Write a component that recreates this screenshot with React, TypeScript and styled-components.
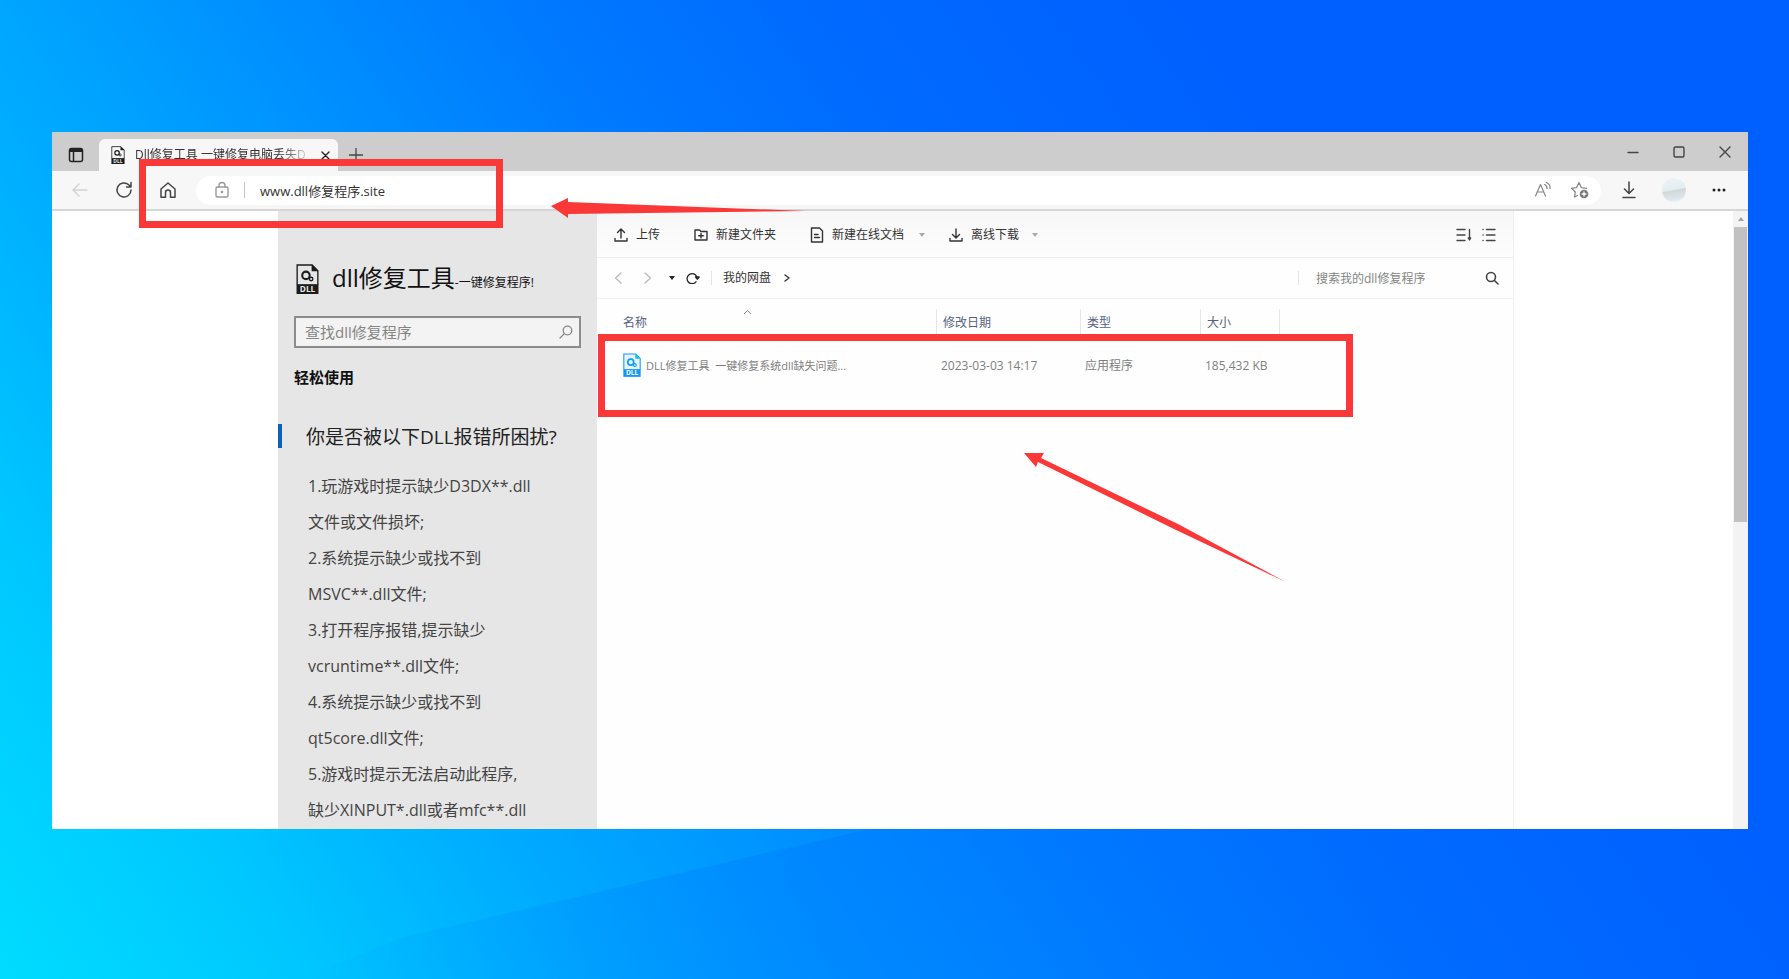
import React from 'react';
import styled, { createGlobalStyle } from 'styled-components';

const Global = createGlobalStyle`
  * { box-sizing: border-box; }
  body {
    margin: 0;
    font-family: "Open Sans", "Noto Sans CJK SC", sans-serif;
    font-size: 12px;
    color: #333;
  }
  button, input { font-family: inherit; font-size: inherit; color: inherit; }
`;

const Desktop = styled.div`
  position: relative;
  min-height: 100vh;
  display: flex;
  padding: 132px 41px 150px 52px;
  overflow: hidden;
  background: linear-gradient(56deg, #00dcff 0%, #00c8ff 12%, #00acff 24%, #0092ff 36%, #007aff 48%, #006aff 60%, #0060ff 75%);
`;

const Beams = styled.svg`
  position: absolute;
  inset: 0;
  width: 100%;
  height: 100%;
`;

const BrowserWindow = styled.div`
  position: relative;
  flex: 1;
  min-width: 0;
  display: flex;
  flex-direction: column;
  background: #fff;
`;

const TabBar = styled.div`
  display: flex;
  align-items: stretch;
  height: 39px;
  background: #cdcdcd;
`;

const TabTools = styled.div`
  display: flex;
  align-items: stretch;
  padding-top: 7px;
`;

const IconButton = styled.button<{ $w?: number; $color?: string }>`
  display: flex;
  align-items: center;
  justify-content: center;
  flex: none;
  width: ${(p) => p.$w ?? 44}px;
  padding: 0;
  border: 0;
  background: none;
  color: ${(p) => p.$color ?? '#444'};
`;

const Tab = styled.div`
  display: flex;
  align-items: center;
  width: 239px;
  padding: 0 5px 0 12px;
  gap: 10px;
  border-radius: 6px 6px 0 0;
  background: #f7f7f7;
`;

const TabTitle = styled.span`
  flex: 1;
  white-space: nowrap;
  line-height: 20px;
  mask-image: linear-gradient(90deg, #000 84%, rgba(0, 0, 0, 0.2) 100%);
`;

const Spacer = styled.div`
  flex: 1;
`;

const NavBar = styled.div`
  display: flex;
  align-items: center;
  height: 40px;
  padding: 0 2px 0 6px;
  background: #f7f7f7;
  border-bottom: 2px solid #d6d6d6;
`;

const AddressBar = styled.label`
  display: flex;
  align-items: center;
  flex: 1;
  height: 29px;
  margin-left: 6px;
  padding: 0 2px 0 4px;
  border-radius: 15px;
  background: #fff;
`;

const Rule = styled.span<{ $h?: number; $color?: string }>`
  flex: none;
  width: 1px;
  height: ${(p) => p.$h ?? 16}px;
  background: ${(p) => p.$color ?? '#e4e4e4'};
`;

const UrlInput = styled.input`
  flex: 1;
  min-width: 0;
  margin-left: 15px;
  padding: 0;
  border: 0;
  outline: 0;
  background: none;
  font-size: 13px;
  color: #333;
`;

const Avatar = styled.span`
  width: 24px;
  height: 24px;
  border-radius: 50%;
  background: linear-gradient(170deg, #eef4f7 0%, #e2edf2 48%, #d4d6d8 52%, #dbe6ea 80%, #f2f5f6 100%);
`;

const Body = styled.div`
  flex: 1;
  display: flex;
`;

const Page = styled.div`
  flex: 1;
  min-width: 0;
  display: flex;
  padding: 0 219px 0 226px;
`;

const ScrollTrack = styled.div`
  width: 15px;
  padding: 6px 1px 0;
  background: #f3f3f3;
  display: flex;
  flex-direction: column;
  align-items: center;
  gap: 6px;
`;

const ScrollThumb = styled.div`
  width: 13px;
  height: 295px;
  background: #c1c1c1;
`;

const Sidebar = styled.aside`
  flex: none;
  width: 319px;
  padding: 50px 16px 0;
  background: #e6e6e6;
`;

const Brand = styled.div`
  display: flex;
  align-items: center;
  gap: 13px;
  height: 36px;
  padding-left: 2px;
  color: #111;
`;

const BrandName = styled.h1`
  margin: 0;
  padding-top: 3px;
  font-size: 24px;
  line-height: 36px;
  font-weight: 400;
  white-space: nowrap;
`;

const BrandNote = styled.small`
  font-size: 12px;
`;

const SearchBox = styled.label`
  display: flex;
  align-items: center;
  height: 32px;
  margin-top: 19px;
  padding: 0 6px 0 9px;
  border: 2px solid #8c8c8c;
  background: #f3f3f3;
`;

const SearchInput = styled.input<{ $size: number }>`
  flex: 1;
  min-width: 0;
  padding: 0;
  border: 0;
  outline: 0;
  background: none;
  font-size: ${(p) => p.$size}px;
  &::placeholder { color: #858585; opacity: 1; }
`;

const SectionTitle = styled.h2`
  margin: 18px 0 0;
  font-size: 15px;
  line-height: 22px;
  font-weight: 700;
  color: #111;
`;

const Question = styled.h3`
  display: flex;
  align-items: center;
  height: 24px;
  margin: 36px -16px 0;
  padding-left: 24px;
  border-left: 4px solid #0a63b0;
  font-size: 19px;
  font-weight: 400;
  white-space: nowrap;
  color: #222;
`;

const Causes = styled.p`
  margin: 20px 0 0;
  padding-left: 14px;
  font-size: 16px;
  line-height: 36px;
  white-space: nowrap;
  color: #444;
`;

const Drive = styled.main`
  flex: 1;
  min-width: 0;
  border-right: 1px solid #f0f0f0;
  background: #fefefe;
`;

const Actions = styled.div`
  display: flex;
  align-items: center;
  height: 47px;
  padding: 2px 17px 0 17px;
  border-bottom: 1px solid #eee;
  background: linear-gradient(#f7f7f7, #fdfdfd);
`;

const Action = styled.button<{ $gap: number }>`
  display: flex;
  align-items: center;
  gap: 8px;
  margin-right: ${(p) => p.$gap}px;
  padding: 0;
  border: 0;
  background: none;
  line-height: 20px;
  white-space: nowrap;
  color: #333;
`;

const ViewTools = styled.div`
  display: flex;
  gap: 10px;
`;

const Caret = styled.i<{ $ml?: number; $color: string; $up?: boolean }>`
  width: 0;
  height: 0;
  margin-left: ${(p) => p.$ml ?? 0}px;
  border: 3px solid transparent;
  border-top: ${(p) => (p.$up ? '0' : `4px solid ${p.$color}`)};
  border-bottom: ${(p) => (p.$up ? `4px solid ${p.$color}` : '0')};
`;

const PathBar = styled.nav`
  display: flex;
  align-items: center;
  height: 41px;
  padding: 0 13px 0 10px;
  border-bottom: 1px solid #f0f0f0;
`;

const Crumb = styled.a`
  margin: 0 13px 0 11px;
  line-height: 20px;
  text-decoration: none;
  color: #333;
`;

const DriveSearch = styled.label`
  display: flex;
  align-items: center;
  width: 201px;
  padding-left: 17px;
`;

const FileTable = styled.table`
  width: 100%;
  table-layout: fixed;
  border-collapse: collapse;
`;

const HeadCell = styled.th<{ $first?: boolean; $line?: boolean }>`
  position: relative;
  height: 36px;
  padding: 12px 0 0 ${(p) => (p.$first ? 26 : 6)}px;
  text-align: left;
  line-height: 22px;
  font-weight: 400;
  color: #56627f;
  background: ${(p) => (p.$line ? 'linear-gradient(#e6e6e6, #e6e6e6) right 0 top 10px / 1px 26px no-repeat' : 'none')};
`;

const SortMark = styled.svg`
  position: absolute;
  left: 146px;
  top: 10px;
`;

const Cell = styled.td<{ $first?: boolean }>`
  height: 60px;
  padding: 0 0 0 ${(p) => (p.$first ? 26 : 4)}px;
  color: #808080;
  white-space: nowrap;
`;

const FileName = styled.span`
  display: flex;
  align-items: center;
  gap: 5px;
  font-size: 11px;
  white-space: pre;
`;

const Highlight = styled.div<{ $x: number; $y: number; $w: number; $h: number }>`
  position: absolute;
  left: ${(p) => p.$x}px;
  top: ${(p) => p.$y}px;
  width: ${(p) => p.$w}px;
  height: ${(p) => p.$h}px;
  border: 7px solid #fb3838;
  pointer-events: none;
`;

const Arrows = styled.svg`
  position: absolute;
  left: 0;
  top: 0;
  width: 100%;
  height: 100%;
  pointer-events: none;
`;

const DllSheet = styled.svg`
  flex: none;
`;

const Line = ({ w, h, box, sw = 1.4, children }: { w: number; h: number; box: string; sw?: number; children: React.ReactNode }) => (
  <svg width={w} height={h} viewBox={box} fill="none" stroke="currentColor" strokeWidth={sw} strokeLinecap="round" strokeLinejoin="round" aria-hidden="true">
    {children}
  </svg>
);

const DllIcon = ({ w, h, blue }: { w: number; h: number; blue?: boolean }) => {
  const c = blue ? '#139af0' : '#1c1c1c';
  return (
    <DllSheet width={w} height={h} viewBox="0 0 22 29" aria-hidden="true">
      <path d="M1 20V1h14.5L21 6.500V20" fill={blue ? '#e4f5ff' : 'none'} stroke={c} strokeWidth="1.300" />
      <path d="M15 0.500V7h6.500z" fill={blue ? '#19c3e6' : c} />
      <circle cx="9.500" cy="11" r="3.600" fill="none" stroke={c} strokeWidth="2" />
      <circle cx="14.500" cy="14.500" r="1.700" fill="none" stroke={c} strokeWidth="1.300" />
      <rect x="0.400" y="19.500" width="21.200" height="9.500" fill={c} />
      <text x="11" y="27.300" textAnchor="middle" fontSize="8" fontWeight="700" fontFamily="Open Sans, sans-serif" fill={blue ? '#fff' : '#e6e6e6'}>DLL</text>
    </DllSheet>
  );
};

const causes = [
  '1.玩游戏时提示缺少D3DX**.dll',
  '文件或文件损坏;',
  '2.系统提示缺少或找不到',
  'MSVC**.dll文件;',
  '3.打开程序报错,提示缺少',
  'vcruntime**.dll文件;',
  '4.系统提示缺少或找不到',
  'qt5core.dll文件;',
  '5.游戏时提示无法启动此程序,',
  '缺少XINPUT*.dll或者mfc**.dll',
];

export default function App() {
  return (
    <Desktop>
      <Global />
      <Beams viewBox="0 0 1789 979" preserveAspectRatio="none" aria-hidden="true">
        <defs>
          <linearGradient id="beam" x1="0" y1="0" x2="1" y2="0">
            <stop offset="0" stopColor="#0078ff" stopOpacity="0" />
            <stop offset="0.350" stopColor="#0078ff" stopOpacity="0.400" />
            <stop offset="1" stopColor="#0060ff" stopOpacity="0" />
          </linearGradient>
        </defs>
        <path d="M300 979L400 938 870 829H1789V979z" fill="url(#beam)" />
      </Beams>
      <BrowserWindow>
        <TabBar>
          <TabTools>
            <IconButton $w={47} $color="#222" aria-label="标签页操作">
              <Line w={16} h={16} box="0 0 16 16" sw={1.500}>
                <rect x="1.500" y="1.500" width="13" height="13" rx="2" />
                <path d="M2 3.500h12" strokeWidth="3" strokeLinecap="butt" />
                <path d="M5.500 5v9" />
              </Line>
            </IconButton>
            <Tab>
              <DllIcon w={14} h={18} />
              <TabTitle>Dll修复工具 一键修复电脑丢失D</TabTitle>
              <IconButton $w={20} $color="#222" aria-label="关闭标签页">
                <Line w={9} h={9} box="0 0 9 9"><path d="M1 1l7 7M8 1l-7 7" /></Line>
              </IconButton>
            </Tab>
            <IconButton $w={36} aria-label="新建标签页">
              <Line w={14} h={14} box="0 0 14 14" sw={1.300}><path d="M7 0.500v13M0.500 7h13" /></Line>
            </IconButton>
          </TabTools>
          <Spacer />
          <IconButton $w={46} aria-label="最小化">
            <Line w={12} h={12} box="0 0 12 12"><path d="M1 6.500h10" /></Line>
          </IconButton>
          <IconButton $w={46} aria-label="最大化">
            <Line w={12} h={12} box="0 0 12 12"><rect x="1" y="1" width="10" height="10" rx="1.500" /></Line>
          </IconButton>
          <IconButton $w={46} aria-label="关闭">
            <Line w={12} h={12} box="0 0 12 12"><path d="M1 1l10 10M11 1L1 11" /></Line>
          </IconButton>
        </TabBar>
        <NavBar>
          <IconButton $color="#d2d2d2" aria-label="后退">
            <Line w={16} h={14} box="0 0 16 14"><path d="M15 7H1M7 1L1 7l6 6" /></Line>
          </IconButton>
          <IconButton aria-label="刷新">
            <Line w={18} h={18} box="0 0 18 18" sw={1.500}><path d="M16 9a7 7 0 1 1-2.300-5.200L16 6M16 1.500V6h-4.500" /></Line>
          </IconButton>
          <IconButton aria-label="主页">
            <Line w={18} h={18} box="0 0 18 18" sw={1.500}><path d="M2 8L9 2l7 6v8.300h-4.500V11.500a2.500 2.500 0 0 0-5 0v4.800H2z" /></Line>
          </IconButton>
          <AddressBar>
            <IconButton as="span" $color="#999">
              <Line w={16} h={18} box="0 0 16 18" sw={1.400}>
                <rect x="2" y="6" width="12" height="10" rx="1.500" />
                <path d="M5 6V4.500a3 3 0 0 1 6 0V6" />
                <circle cx="8" cy="11" r="0.600" fill="currentColor" />
              </Line>
            </IconButton>
            <Rule $color="#c4c4c4" />
            <UrlInput aria-label="地址" defaultValue="www.dll修复程序.site" />
            <IconButton $w={36} $color="#888" aria-label="朗读">
              <Line w={18} h={18} box="0 0 18 18" sw={1.200}>
                <path d="M1.500 15L6.500 3.500 11.500 15M3 11h7M10.500 3.500a4 4 0 0 1 2.500 4M12.300 1.500a6 6 0 0 1 3.800 6" />
              </Line>
            </IconButton>
            <IconButton $w={38} $color="#888" aria-label="收藏">
              <Line w={20} h={18} box="0 0 20 18" sw={1.300}>
                <path d="M7.500 14.500l-3 1.500.8-5L1.500 7.300l5-.7L9 1.500l2.300 5.100 5.200.7" />
                <circle cx="14" cy="13" r="4.300" fill="#777" stroke="none" />
                <path d="M12 13h4M14 11v4" stroke="#fff" />
              </Line>
            </IconButton>
          </AddressBar>
          <IconButton $w={56} aria-label="下载">
            <Line w={14} h={18} box="0 0 14 18" sw={1.500}><path d="M7 1v11M2.500 8L7 12.500 11.500 8M1 16.500h12" /></Line>
          </IconButton>
          <IconButton $w={34} aria-label="个人资料"><Avatar /></IconButton>
          <IconButton $w={55} aria-label="设置及其他">
            <svg width="14" height="4" viewBox="0 0 14 4" aria-hidden="true" fill="#222">
              <circle cx="2" cy="2" r="1.500" /><circle cx="7" cy="2" r="1.500" /><circle cx="12" cy="2" r="1.500" />
            </svg>
          </IconButton>
        </NavBar>
        <Body>
          <Page>
            <Sidebar>
              <Brand>
                <DllIcon w={23} h={30} />
                <BrandName>dll修复工具<BrandNote>-一键修复程序!</BrandNote></BrandName>
              </Brand>
              <SearchBox>
                <SearchInput $size={15} aria-label="查找" placeholder="查找dll修复程序" />
                <IconButton $w={14} $color="#888" aria-label="搜索">
                  <Line w={14} h={14} box="0 0 14 14" sw={1.300}><circle cx="8.500" cy="5.500" r="4.300" /><path d="M5.400 8.600L1 13" /></Line>
                </IconButton>
              </SearchBox>
              <SectionTitle>轻松使用</SectionTitle>
              <Question>你是否被以下DLL报错所困扰?</Question>
              <Causes>
                {causes.map((line, i) => (
                  <React.Fragment key={i}>{i > 0 && <br />}{line}</React.Fragment>
                ))}
              </Causes>
            </Sidebar>
            <Drive>
              <Actions>
                <Action $gap={34}>
                  <Line w={14} h={14} box="0 0 14 14"><path d="M7 10V1.500M3.500 4.500L7 1l3.500 3.500M1 10.500V13h12v-2.500" /></Line>
                  上传
                </Action>
                <Action $gap={34}>
                  <Line w={14} h={14} box="0 0 14 14"><path d="M1 2h4.500L7 3.500h6V12H1zM7 5.500v4.500M4.700 7.700h4.600" /></Line>
                  新建文件夹
                </Action>
                <Action $gap={24}>
                  <Line w={14} h={16} box="0 0 14 16"><path d="M1.500 1h8L12.500 4v11h-11zM4.500 7.500H8M4.500 10.500h5" /></Line>
                  新建在线文档
                  <Caret $ml={7} $color="#aaa" />
                </Action>
                <Action $gap={0}>
                  <Line w={14} h={14} box="0 0 14 14"><path d="M7 1v8.500M3.500 6.500L7 10l3.500-3.500M1 10.500V13h12v-2.500" /></Line>
                  离线下载
                  <Caret $ml={5} $color="#aaa" />
                </Action>
                <Spacer />
                <ViewTools>
                  <IconButton $w={16} aria-label="排序">
                    <Line w={16} h={14} box="0 0 16 14"><path d="M1 1.500h8M1 7h8M1 12.500h8M13.500 1.500v10M12.300 10l1.200 2 1.200-2z" /></Line>
                  </IconButton>
                  <IconButton $w={14} aria-label="列表">
                    <Line w={14} h={14} box="0 0 14 14"><path d="M4.500 1.500H13M4.500 7H13M4.500 12.500H13M1 1.500h.1M1 7h.1M1 12.500h.1" /></Line>
                  </IconButton>
                </ViewTools>
              </Actions>
              <PathBar>
                <IconButton $w={22} $color="#bbb" aria-label="后退"><Line w={8} h={12} box="0 0 8 12"><path d="M7 1L1.500 6 7 11" /></Line></IconButton>
                <IconButton $w={38} $color="#bbb" aria-label="前进"><Line w={8} h={12} box="0 0 8 12"><path d="M1 1l5.500 5L1 11" /></Line></IconButton>
                <Caret $ml={2} $color="#222" />
                <IconButton $w={36} $color="#222" aria-label="刷新">
                  <Line w={14} h={12} box="0 0 14 12" sw={1.300}><path d="M10 9.800A5 5 0 1 1 10.800 5M9.500 5h3.700L11.500 7.200z" /></Line>
                </IconButton>
                <Rule $h={14} />
                <Crumb href="#">我的网盘</Crumb>
                <Line w={6} h={8} box="0 0 6 8"><path d="M1 1l4 3-4 3" /></Line>
                <Spacer />
                <Rule $h={14} />
                <DriveSearch>
                  <SearchInput $size={12} aria-label="搜索网盘" placeholder="搜索我的dll修复程序" />
                  <IconButton as="span" $w={16}>
                    <Line w={14} h={14} box="0 0 14 14" sw={1.600}><circle cx="6" cy="6" r="4.500" /><path d="M9.500 9.500L13 13" /></Line>
                  </IconButton>
                </DriveSearch>
              </PathBar>
              <FileTable>
                <colgroup>
                  <col width="340" /><col width="144" /><col width="120" /><col width="79" /><col />
                </colgroup>
                <thead>
                  <tr>
                    <HeadCell $first $line>名称
                      <SortMark width="9" height="6" viewBox="0 0 9 6" fill="none" stroke="#888"><path d="M1 5l3.500-3.500L8 5" /></SortMark>
                    </HeadCell>
                    <HeadCell $line>修改日期</HeadCell>
                    <HeadCell $line>类型</HeadCell>
                    <HeadCell $line>大小</HeadCell>
                    <HeadCell />
                  </tr>
                </thead>
                <tbody>
                  <tr>
                    <Cell $first><FileName><DllIcon w={18} h={24} blue />DLL修复工具  一键修复系统dll缺失问题...</FileName></Cell>
                    <Cell>2023-03-03 14:17</Cell>
                    <Cell>应用程序</Cell>
                    <Cell>185,432 KB</Cell>
                    <Cell />
                  </tr>
                </tbody>
              </FileTable>
            </Drive>
          </Page>
          <ScrollTrack>
            <Caret $up $color="#a0a0a0" />
            <ScrollThumb />
          </ScrollTrack>
        </Body>
        <Highlight $x={87} $y={27} $w={364} $h={69} />
        <Highlight $x={546} $y={202} $w={755} $h={83} />
        <Arrows aria-hidden="true" fill="#fb3838">
          <path d="M499 74l17-8v4l238 9-238 3v4z" />
          <path d="M972 321h20l-3 5 137 66 108 58-112-53-136-67-2 5z" />
        </Arrows>
      </BrowserWindow>
    </Desktop>
  );
}
